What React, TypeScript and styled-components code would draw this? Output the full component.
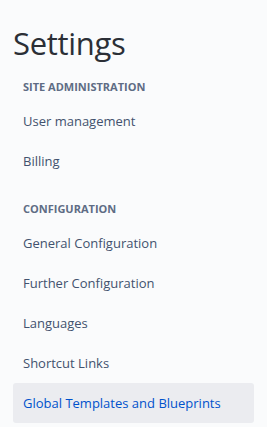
import React, { ReactElement } from "react";
import styled, { createGlobalStyle } from "styled-components";

type NavSection = {
  title: string;
  items: string[];
};

const SECTIONS: NavSection[] = [
  { title: "Site administration", items: ["User management", "Billing"] },
  {
    title: "Configuration",
    items: [
      "General Configuration",
      "Further Configuration",
      "Languages",
      "Shortcut Links",
      "Global Templates and Blueprints",
    ],
  },
];

const ACTIVE_ITEM = "Global Templates and Blueprints";

function App(): ReactElement {
  return (
    <>
      <GlobalStyle />
      <StyledSidebar>
        <StyledTitle>Settings</StyledTitle>
        {SECTIONS.map((section, index) => (
          <StyledSection key={section.title} $first={index === 0}>
            <StyledSectionTitle>{section.title}</StyledSectionTitle>
            {section.items.map((item) => (
              <StyledNavItem key={item} $active={item === ACTIVE_ITEM}>
                {item}
              </StyledNavItem>
            ))}
          </StyledSection>
        ))}
      </StyledSidebar>
    </>
  );
}

export default App;

const GlobalStyle = createGlobalStyle`
  html, body {
    margin: 0;
    padding: 0;
    background: #fafbfc;
  }

  body {
    font-family: "Open Sans", "Noto Sans", sans-serif;
    -webkit-font-smoothing: antialiased;
  }
`;

const StyledSidebar = styled.nav`
  display: flex;
  flex-direction: column;
  width: 254px;
  padding: 21px 0 0 13px;
  background: #fafbfc;
  min-height: 427px;
  box-sizing: border-box;
`;

const StyledTitle = styled.h1`
  margin: 0;
  font-size: 31px;
  font-weight: 400;
  line-height: 44px;
  color: #2b2f36;
  letter-spacing: -0.3px;
`;

const StyledSection = styled.section<{ $first: boolean }>`
  display: flex;
  flex-direction: column;
  padding-top: ${({ $first }) => ($first ? "14px" : "20px")};
`;

const StyledSectionTitle = styled.h2`
  margin: 0;
  padding: 0 10px 6px;
  font-size: 11px;
  font-weight: 700;
  line-height: 16px;
  text-transform: uppercase;
  color: #5e6c84;
`;

const StyledNavItem = styled.a<{ $active: boolean }>`
  display: flex;
  align-items: center;
  height: 40px;
  padding: 0 10px;
  border-radius: 3px;
  font-size: 13px;
  color: ${({ $active }) => ($active ? "#0052cc" : "#42526e")};
  background: ${({ $active }) => ($active ? "#ebecf0" : "transparent")};
  cursor: pointer;
  white-space: nowrap;
`;
